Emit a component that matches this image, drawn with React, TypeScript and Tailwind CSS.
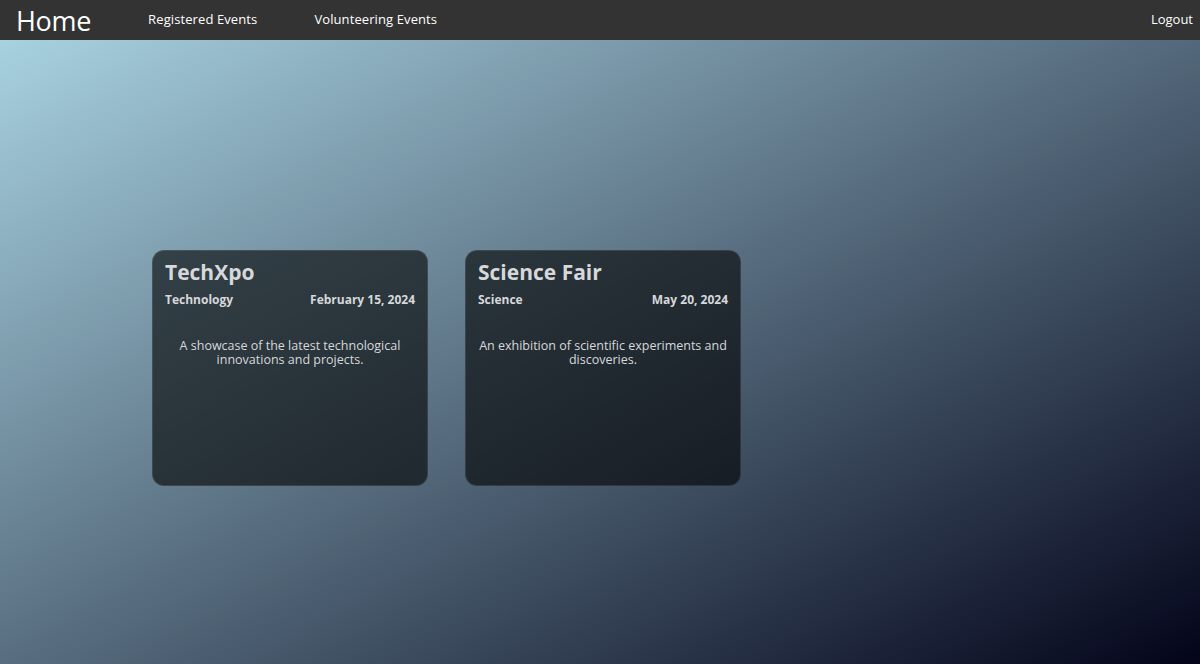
import React from "react";

interface EventItem {
  id: number;
  title: string;
  category: string;
  date: string;
  description: string;
}

const events: EventItem[] = [
  {
    id: 1,
    title: "TechXpo",
    category: "Technology",
    date: "February 15, 2024",
    description: "A showcase of the latest technological innovations and projects.",
  },
  {
    id: 2,
    title: "Science Fair",
    category: "Science",
    date: "May 20, 2024",
    description: "An exhibition of scientific experiments and discoveries.",
  },
];

const Navbar: React.FC = () => {
  return (
    <nav className="flex h-10 items-center bg-[#333333] pl-4 pr-[7px] text-white">
      <a href="#" className="text-[27px] leading-none tracking-[-0.3px]">
        Home
      </a>
      <div className="ml-[57px] flex gap-[57px] text-[13px] tracking-[0.1px]">
        <a href="#">Registered Events</a>
        <a href="#">Volunteering Events</a>
      </div>
      <a href="#" className="ml-auto text-[13px]">
        Logout
      </a>
    </nav>
  );
};

const EventCard: React.FC<{ event: EventItem }> = ({ event }) => {
  return (
    <div className="h-[236px] w-[276px] rounded-xl border border-white/10 bg-black/60 px-3 pt-[8px] text-[#d6d8da]">
      <h2 className="text-[21px] font-bold leading-[26px]">{event.title}</h2>
      <div className="mt-[7px] flex justify-between text-[12px] font-bold leading-4">
        <span>{event.category}</span>
        <span>{event.date}</span>
      </div>
      <p className="mt-[31px] text-center text-[12.5px] leading-[14px]">
        {event.description}
      </p>
    </div>
  );
};

const App: React.FC = () => {
  return (
    <div
      className="flex min-h-screen flex-col bg-linear-to-br/srgb from-[#add8e6] to-[#03041a]"
      style={{ fontFamily: '"Open Sans", "Noto Sans", sans-serif' }}
    >
      <Navbar />
      <main className="flex flex-1 items-start gap-[37px] px-[152px] pt-[210px]">
        {events.map((event) => (
          <EventCard key={event.id} event={event} />
        ))}
      </main>
    </div>
  );
};

export default App;
